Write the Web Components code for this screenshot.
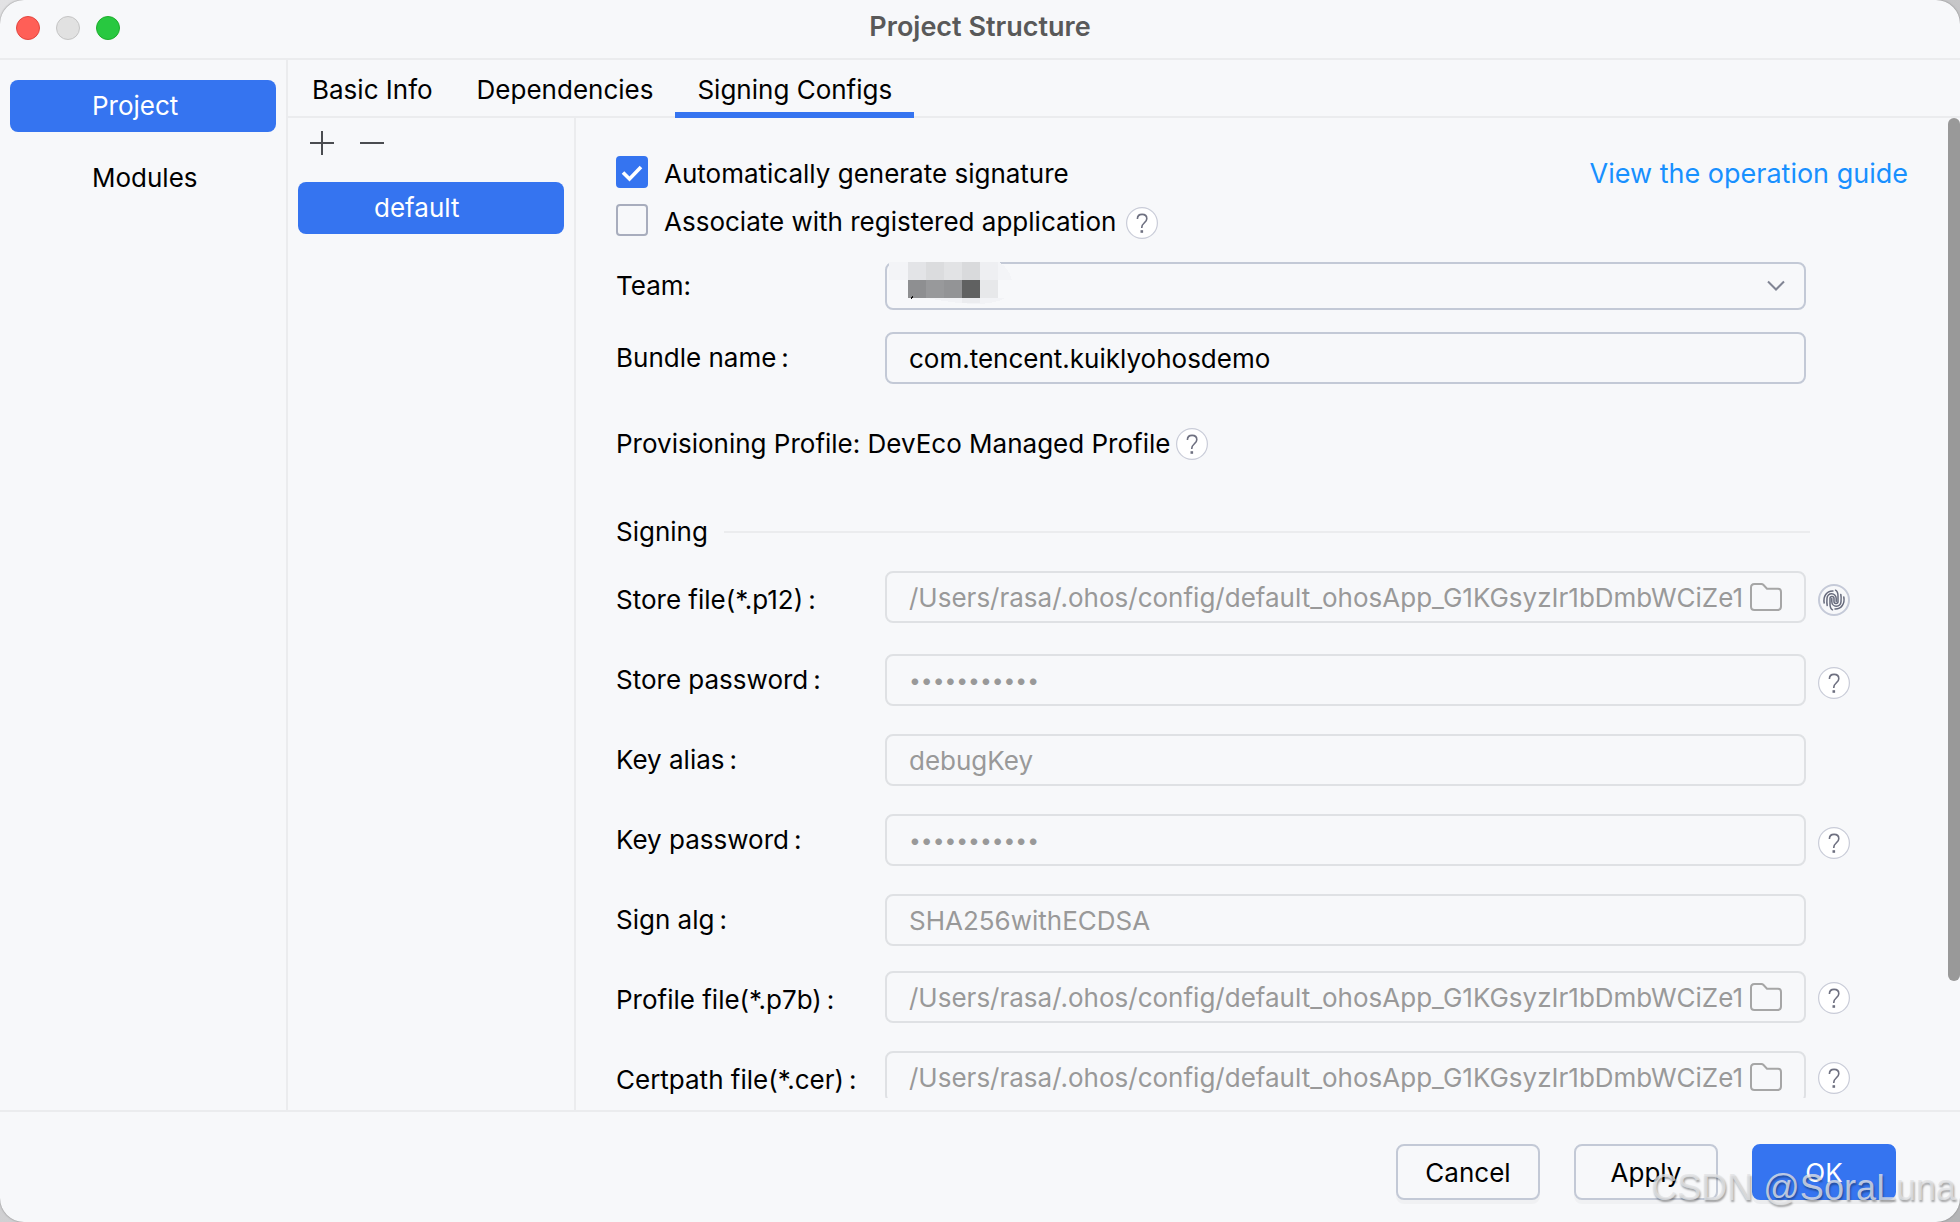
<!DOCTYPE html>
<html lang="en">
<head>
<meta charset="utf-8">
<title>Project Structure</title>
<style>
    html, body {
        height: 100%;
        margin: 0;
    }
    body {
        background: linear-gradient(135deg, #e2e2e4, #b4b4b6);
        font-family: Inter, sans-serif;
        font-size: 26px;
        line-height: 32px;
        color: #000;
        overflow: hidden;
    }
</style>
</head>
<body>

<project-window>
    <side-item slot="nav" selected>Project</side-item>
    <side-item slot="nav">Modules</side-item>

    <tab-item slot="tabs">Basic Info</tab-item>
    <tab-item slot="tabs">Dependencies</tab-item>
    <tab-item slot="tabs" selected>Signing Configs</tab-item>

    <side-item slot="configs" selected style="--indent: 76px">default</side-item>

    <signing-form></signing-form>

    <action-button slot="actions">Cancel</action-button>
    <action-button slot="actions">Apply</action-button>
    <action-button slot="actions" primary>OK</action-button>
</project-window>
<water-mark>CSDN @SoraLuna</water-mark>

<script>
// helper: every element gets an open root filled from its own template
function makeTemplate(html) {
    const t = document.createElement("template");
    t.innerHTML = html;
    return t;
}

class BaseElement extends HTMLElement {
    constructor() {
        super();
        this.attachShadow({ mode: "open" });
    }
    connectedCallback() {
        if (this.shadowRoot.childNodes.length) return;
        this.shadowRoot.appendChild(this.constructor.template.content.cloneNode(true));
        this.setup();
    }
    setup() {}
    $(sel) {
        return this.shadowRoot.querySelector(sel);
    }
}

// ---- sidebar entry ----
class SideItem extends BaseElement {
    static template = makeTemplate(`
        <style>
            :host { display: block; }
            button {
                display: block;
                width: 100%;
                height: 52px;
                border: 0;
                border-radius: 8px;
                padding: 0 0 0 var(--indent, 82px);
                background: transparent;
                color: #000;
                font: inherit;
                text-align: left;
            }
            :host([selected]) button { background: #3574f0; color: #fff; }
        </style>
        <button type="button"><slot></slot></button>
    `);
}
customElements.define("side-item", SideItem);

// ---- tab ----
class TabItem extends BaseElement {
    static template = makeTemplate(`
        <style>
            :host { display: block; }
            button {
                display: block;
                height: 58px;
                border: 0;
                border-bottom: 6px solid transparent;
                padding: 8px 22px 0;
                background: transparent;
                color: #000;
                font: inherit;
            }
            :host([selected]) button { border-color: #3574f0; }
        </style>
        <button type="button" role="tab"><slot></slot></button>
    `);
    setup() {
        this.$("button").setAttribute("aria-selected", this.hasAttribute("selected"));
    }
}
customElements.define("tab-item", TabItem);

// ---- footer button ----
class ActionButton extends BaseElement {
    static template = makeTemplate(`
        <style>
            :host { display: block; }
            button {
                box-sizing: border-box;
                display: block;
                width: 144px;
                height: 56px;
                border: 2px solid #c3c9d6;
                border-radius: 8px;
                padding: 2px 0 0;
                background: #f7f8fa;
                box-shadow: 0 4px 0 #f0f1f3;
                color: #000;
                font: inherit;
            }
            :host([primary]) button {
                border-color: #3574f0;
                background: #3574f0;
                box-shadow: 0 4px 0 #ebecee;
                color: #fff;
            }
        </style>
        <button type="button"><slot></slot></button>
    `);
}
customElements.define("action-button", ActionButton);

// ---- round help icon ----
class HelpIcon extends BaseElement {
    static template = makeTemplate(`
        <style>
            :host { display: block; flex: none; width: 32px; height: 32px; }
            svg { display: block; }
        </style>
        <svg width="32" height="32" viewBox="0 0 32 32" fill="none" role="img" aria-label="Help">
            <circle cx="16" cy="16" r="15.4" fill="#fff" stroke="#c9ccd8" stroke-width="1.2"/>
            <path d="M11.4 12c0-2.900 2-4.600 4.700-4.600s4.700 1.700 4.700 4.300c0 2.100-1.200 3.100-2.600 4.300-1.500 1.300-2.400 2.200-2.400 4.300v.6" stroke="#6e7080" stroke-width="1.600"/>
            <rect x="14.500" y="23.200" width="2.600" height="2.600" fill="#6e7080"/>
        </svg>
    `);
}
customElements.define("help-icon", HelpIcon);

// ---- fingerprint icon, both halves are the same ridges turned round ----
class FingerprintIcon extends BaseElement {
    static template = makeTemplate(`
        <style>
            :host { display: block; flex: none; width: 32px; height: 32px; }
            svg { display: block; }
        </style>
        <svg width="32" height="32" viewBox="0 0 32 32" fill="none" role="img" aria-label="Fingerprint">
            <circle cx="16" cy="16" r="15" stroke="#c5cad8" stroke-width="2"/>
            <g stroke="#666a7c" stroke-width="1.500" stroke-linecap="round">
                <path d="M14.500 25.800C11.700 24.300 12 21.500 12 19V14.500a2 2 0 0 1 4 0V17.500a2 2 0 0 0 4 0V13C20 10.500 20.300 7.700 17.500 6.200"/>
                <path d="M9.200 21.500C8.700 19.500 8.800 17 9 14.300a4.600 4.600 0 0 1 9.200 .2V17.500"/>
                <path d="M22.800 10.500C23.300 12.500 23.200 15 23 17.700a4.600 4.600 0 0 1-9.200-.2V14.500"/>
                <path d="M6.200 19C5 12.500 8.500 6.800 15 7"/>
                <path d="M25.800 13C27 19.500 23.500 25.200 17 25"/>
            </g>
        </svg>
    `);
}
customElements.define("fingerprint-icon", FingerprintIcon);

// ---- check box with its label ----
class CheckRow extends BaseElement {
    static template = makeTemplate(`
        <style>
            :host { display: flex; align-items: center; gap: 10px; height: 48px; }
            label { display: flex; align-items: center; gap: 16px; }
            input {
                appearance: none;
                box-sizing: border-box;
                width: 32px;
                height: 32px;
                margin: 0;
                border: 2px solid #a8adbd;
                border-radius: 4px;
            }
            .box { display: grid; flex: none; }
            .box > * { grid-area: 1 / 1; }
            .text { padding-top: 4px; }
            svg { visibility: hidden; }
            input:checked { border-color: #3574f0; background: #3574f0; }
            input:checked + svg { visibility: visible; }
            ::slotted(help-icon) { margin-top: 6px; }
        </style>
        <label>
            <span class="box">
                <input type="checkbox">
                <svg width="32" height="32" viewBox="0 0 32 32" fill="none">
                    <path d="M7 16.500l6.500 6.500L25 11" stroke="#fff" stroke-width="3.600"/>
                </svg>
            </span>
            <span class="text"><slot></slot></span>
        </label>
        <slot name="after"></slot>
    `);
    setup() {
        this.$("input").checked = this.hasAttribute("checked");
    }
}
customElements.define("check-row", CheckRow);

// ---- label + text box, kind = text | password | file ----
class FieldRow extends BaseElement {
    static template = makeTemplate(`
        <style>
            :host {
                display: grid;
                grid-template-columns: 257px minmax(0, 1fr) 32px;
                column-gap: 12px;
                align-items: center;
            }
            .colon { margin-left: 5px; }
            .box {
                box-sizing: border-box;
                display: flex;
                align-items: center;
                height: 52px;
                border: 2px solid #c3c9d6;
                border-radius: 8px;
                padding: 2px 22px 0;
            }
            :host([disabled]) .box { border-color: #dfe1e4; }
            :host([kind="file"]) .box { margin-bottom: 6px; }
            input {
                flex: 1;
                min-width: 0;
                border: 0;
                padding: 0;
                background: transparent;
                color: #000;
                font: inherit;
                outline: none;
            }
            input:disabled { color: #999; }
            input[type="password"] { font-size: 21px; }
            button {
                display: none;
                flex: none;
                width: 32px;
                height: 28px;
                margin: 0 0 2px 6px;
                border: 0;
                padding: 0;
                background: transparent;
            }
            :host([kind="file"]) button { display: block; }
            svg { display: block; }
            ::slotted(*) { margin-top: 6px; }
            :host([kind="file"]) ::slotted(*) { margin-top: 0; }
            :host([kind="file"]) ::slotted(help-icon) { margin-bottom: 4px; }
        </style>
        <label for="control"><span class="name"></span><span class="colon">:</span></label>
        <div class="box">
            <input id="control" type="text" spellcheck="false">
            <button type="button" aria-label="Browse">
                <svg width="32" height="28" viewBox="0 0 32 28" fill="none">
                    <path d="M1 4.500Q1 1 4.500 1H11.500Q12.500 1 13.300 1.800L17 5.700H28Q31 5.700 31 9V23.500Q31 27 27.500 27H4.500Q1 27 1 23.500Z" stroke="#a6a6a6" stroke-width="2"/>
                </svg>
            </button>
        </div>
        <slot></slot>
    `);
    setup() {
        const input = this.$("input");
        this.$(".name").textContent = this.getAttribute("label");
        if (this.getAttribute("kind") === "password") input.type = "password";
        input.value = this.getAttribute("value");
        input.disabled = this.hasAttribute("disabled");
    }
}
customElements.define("field-row", FieldRow);

// ---- team drop-down, its value is pixelated ----
class TeamRow extends BaseElement {
    static template = makeTemplate(`
        <style>
            :host {
                display: grid;
                grid-template-columns: 257px minmax(0, 1fr) 32px;
                column-gap: 12px;
                align-items: center;
            }
            .box { position: relative; display: grid; }
            select {
                appearance: none;
                width: 100%;
                height: 48px;
                border: 2px solid #c3c9d6;
                border-radius: 8px;
                background: transparent;
                font: inherit;
            }
            svg { position: absolute; pointer-events: none; }
            .mosaic { left: 2px; top: 0; }
            .arrow { right: 20px; top: 18px; }
        </style>
        <label for="team">Team:</label>
        <div class="box">
            <select id="team"><option></option></select>
            <svg class="mosaic" width="130" height="44" viewBox="0 0 130 44" shape-rendering="crispEdges">
                <path fill="#f3f4f7" d="M2 0H112Q122 6 125 18H2Z"/>
                <path fill="#f2f3f6" d="M40 36H118Q110 41 93 42Q70 42 40 36Z"/>
                <path fill="#e3e4e7" d="M21 0h18v18h-18z"/>
                <path fill="#dbdcde" d="M39 0h18v18h-18z"/>
                <path fill="#e2e3e5" d="M57 0h18v18h-18z"/>
                <path fill="#d9dadc" d="M75 0h18v18h-18z"/>
                <path fill="#eeeff2" d="M93 0h18v18h-18z"/>
                <path fill="#8e8f91" d="M21 18h18v18h-18z"/>
                <path fill="#98999b" d="M39 18h18v18h-18z"/>
                <path fill="#939496" d="M57 18h18v18h-18z"/>
                <path fill="#606161" d="M75 18h18v18h-18z"/>
                <path fill="#e7e8ea" d="M93 18h18v18h-18z"/>
                <path fill="#ebecef" d="M75 36h18v5h-18z"/>
                <path fill="#111" d="M23 36l3-2v1l-2 2z"/>
            </svg>
            <svg class="arrow" width="20" height="12" viewBox="0 0 20 12" fill="none">
                <path d="M2 1.500L10 9.500L18 1.500" stroke="#818594" stroke-width="2"/>
            </svg>
        </div>
    `);
}
customElements.define("team-row", TeamRow);

// ---- whole form on the Signing Configs tab ----
class SigningForm extends BaseElement {
    static template = makeTemplate(`
        <style>
            :host { display: block; padding: 30px 40px 0; }
            .top { display: flex; justify-content: space-between; align-items: flex-start; }
            a { color: #1890ff; font-size: 27px; line-height: 52px; text-decoration: none; }
            .fields { padding-right: 58px; }
            team-row { margin-top: 18px; }
            .bundle { margin-top: 22px; }
            .profile { display: flex; align-items: center; gap: 6px; margin-top: 44px; }
            .signing { display: flex; align-items: center; gap: 16px; margin: 56px 40px 12px 0; }
            h2 { margin: 0; font: inherit; }
            hr { flex: 1; height: 2px; margin: 0; border: 0; background: #ebecee; }
            .rows { display: grid; grid-auto-rows: 80px; }
        </style>
        <div class="top">
            <div>
                <check-row checked>Automatically generate signature</check-row>
                <check-row>Associate with registered application<help-icon slot="after"></help-icon></check-row>
            </div>
            <a href="#guide">View the operation guide</a>
        </div>
        <div class="fields">
            <team-row></team-row>
            <field-row class="bundle" label="Bundle name" value="com.tencent.kuiklyohosdemo"></field-row>
            <div class="profile">Provisioning Profile: DevEco Managed Profile<help-icon></help-icon></div>
            <div class="signing"><h2>Signing</h2><hr></div>
            <div class="rows">
                <field-row disabled kind="file" label="Store file(*.p12)" value="/Users/rasa/.ohos/config/default_ohosApp_G1KGsyzIr1bDmbWCiZe1"><fingerprint-icon></fingerprint-icon></field-row>
                <field-row disabled kind="password" label="Store password" value="storepasswd"><help-icon></help-icon></field-row>
                <field-row disabled label="Key alias" value="debugKey"></field-row>
                <field-row disabled kind="password" label="Key password" value="storepasswd"><help-icon></help-icon></field-row>
                <field-row disabled label="Sign alg" value="SHA256withECDSA"></field-row>
                <field-row disabled kind="file" label="Profile file(*.p7b)" value="/Users/rasa/.ohos/config/default_ohosApp_G1KGsyzIr1bDmbWCiZe1"><help-icon></help-icon></field-row>
                <field-row disabled kind="file" label="Certpath file(*.cer)" value="/Users/rasa/.ohos/config/default_ohosApp_G1KGsyzIr1bDmbWCiZe1"><help-icon></help-icon></field-row>
            </div>
        </div>
    `);
}
customElements.define("signing-form", SigningForm);

// ---- dialog frame ----
class ProjectWindow extends BaseElement {
    static template = makeTemplate(`
        <style>
            :host {
                --line: #ebecee;
                display: grid;
                grid-template-rows: 60px minmax(0, 1fr) 112px;
                box-sizing: border-box;
                height: 100vh;
                border-radius: 24px;
                background: #f7f8fa;
                box-shadow: 0 0 2px #777;
                overflow: hidden;
            }
            header {
                display: grid;
                grid-template-columns: 1fr auto 1fr;
                align-items: center;
                border-bottom: 2px solid var(--line);
                padding: 0 16px 2px;
            }
            .lights { display: flex; gap: 16px; }
            .lights button {
                box-sizing: border-box;
                width: 24px;
                height: 24px;
                border: 1px solid #e2463f;
                border-radius: 50%;
                padding: 0;
                background: #ff5f57;
            }
            .lights .min { border-color: #c4c4c4; background: #e1e1e1; }
            .lights .max { border-color: #1dad2b; background: #28c840; }
            h1 { margin: 0; padding-bottom: 2px; font-size: 27px; line-height: 32px; font-weight: 600; color: #595959; }
            .body { display: grid; grid-template-columns: 288px minmax(0, 1fr); }
            nav {
                box-sizing: border-box;
                display: flex;
                flex-direction: column;
                gap: 20px;
                border-right: 2px solid var(--line);
                padding: 20px 10px;
            }
            .page { display: grid; grid-template-rows: 58px minmax(0, 1fr); min-height: 0; }
            .tabs { display: flex; padding-left: 2px; box-shadow: inset 0 -2px var(--line); }
            .split { display: grid; grid-template-columns: 288px minmax(0, 1fr) 12px; min-height: 0; }
            .configs { border-right: 2px solid var(--line); padding: 0 10px; }
            .tools { display: flex; gap: 18px; height: 64px; padding: 9px 8px 0; box-sizing: border-box; }
            .tools button { width: 32px; height: 32px; border: 0; padding: 0; background: transparent; }
            .tools svg { display: block; }
            .scroll { overflow: hidden; margin-bottom: 12px; }
            .bar { height: 87%; border-radius: 6px; background: #999; }
            footer {
                display: flex;
                justify-content: flex-end;
                gap: 34px;
                border-top: 2px solid var(--line);
                padding: 32px 64px 0;
            }
        </style>
        <header>
            <div class="lights">
                <button type="button" aria-label="Close"></button>
                <button type="button" class="min" aria-label="Minimize"></button>
                <button type="button" class="max" aria-label="Zoom"></button>
            </div>
            <h1>Project Structure</h1>
        </header>
        <div class="body">
            <nav><slot name="nav"></slot></nav>
            <div class="page">
                <div class="tabs" role="tablist"><slot name="tabs"></slot></div>
                <div class="split">
                    <div class="configs">
                        <div class="tools">
                            <button type="button" aria-label="Add">
                                <svg width="32" height="32" viewBox="0 0 32 32"><path d="M4 16h24M16 4v24" stroke="#4a4c50" stroke-width="2"/></svg>
                            </button>
                            <button type="button" aria-label="Remove">
                                <svg width="32" height="32" viewBox="0 0 32 32"><path d="M4 16h24" stroke="#4a4c50" stroke-width="2"/></svg>
                            </button>
                        </div>
                        <slot name="configs"></slot>
                    </div>
                    <main class="scroll"><slot></slot></main>
                    <div class="bar"></div>
                </div>
            </div>
        </div>
        <footer><slot name="actions"></slot></footer>
    `);
}
customElements.define("project-window", ProjectWindow);

// ---- mark over the bottom right corner ----
class WaterMark extends BaseElement {
    static template = makeTemplate(`
        <style>
            :host {
                position: absolute;
                right: 4px;
                bottom: 12px;
                color: rgba(226, 227, 229, 0.8);
                font: 36px/44px "Liberation Sans", sans-serif;
                text-shadow: 1px 2px 2px rgba(0, 0, 0, 0.35);
                pointer-events: none;
            }
        </style>
        <slot></slot>
    `);
}
customElements.define("water-mark", WaterMark);
</script>
</body>
</html>
